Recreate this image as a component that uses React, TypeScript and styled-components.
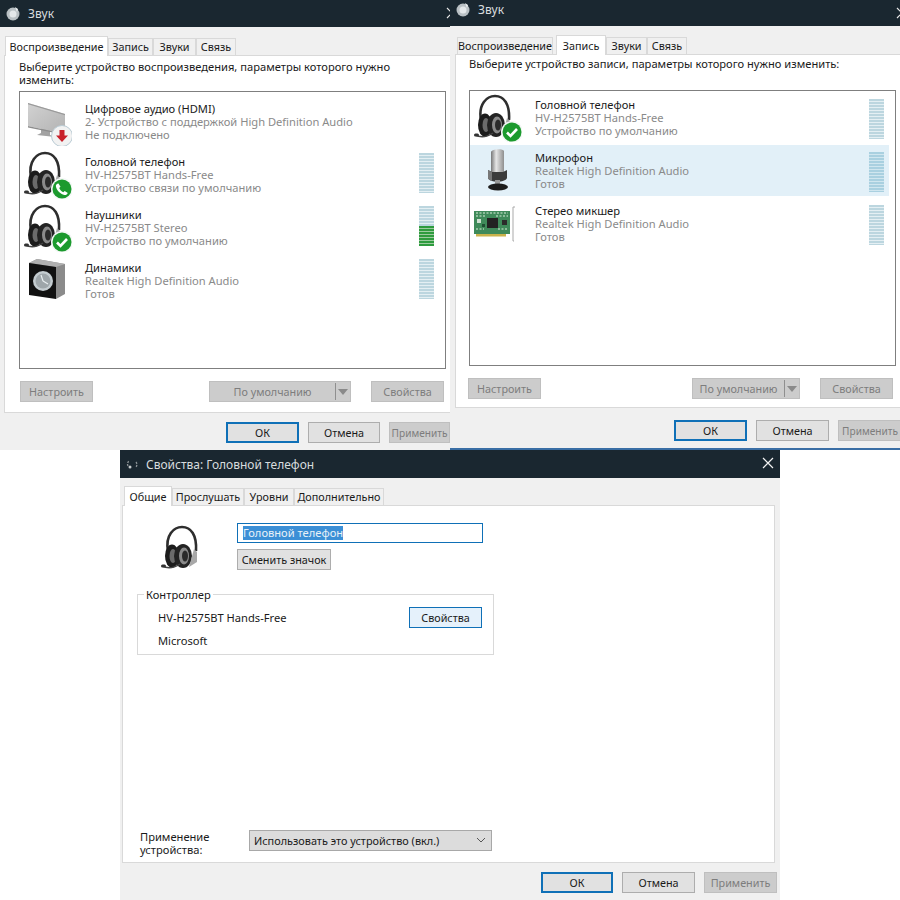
import React from "react";
import styled, { createGlobalStyle } from "styled-components";

const Global = createGlobalStyle`
  html, body { margin: 0; padding: 0; background: #fff; }
  body { font-family: "Noto Sans", "Open Sans", sans-serif; font-size: 11.15px; color: #1a1a1a; }
  #root { width: 900px; height: 900px; overflow: hidden; }
`;

const Page = styled.div`
  width: 900px;
  height: 900px;
  display: flex;
  flex-direction: column;
  background: #fff;
`;
const TopRow = styled.div`
  display: flex;
  height: 450px;
`;
const BottomRow = styled.div`
  display: flex;
  height: 450px;
  padding-left: 120px;
`;
const Win = styled.section<{ $w: number; $blue?: boolean }>`
  width: ${(p) => p.$w}px;
  height: 450px;
  flex: none;
  display: flex;
  flex-direction: column;
  background: #f0f0f0;
  overflow: hidden;
  box-sizing: border-box;
  border-bottom: ${(p) => (p.$blue ? "2px solid #3a6ea5" : "none")};
`;
const TitleBar = styled.header<{ $h: number; $pl: number; $pb?: number }>`
  height: ${(p) => p.$h}px;
  flex: none;
  box-sizing: border-box;
  background: #1a2730;
  color: #d8dcde;
  display: flex;
  align-items: center;
  padding-left: ${(p) => p.$pl}px;
  padding-bottom: ${(p) => p.$pb ?? 0}px;
  gap: 7px;
  font-size: 12px;
  position: relative;
`;
const CloseX = styled.span<{ $r: number }>`
  position: absolute;
  right: ${(p) => p.$r}px;
  top: 6px;
  width: 14px;
  height: 14px;
  display: block;
`;
const Tabs = styled.nav<{ $h: number; $pl: number }>`
  height: ${(p) => p.$h}px;
  flex: none;
  display: flex;
  align-items: flex-end;
  padding-left: ${(p) => p.$pl}px;
`;
const Tab = styled.div<{ $w: number; $active?: boolean; $gap?: number }>`
  width: ${(p) => p.$w}px;
  height: ${(p) => (p.$active ? 20 : 17)}px;
  margin-left: ${(p) => p.$gap ?? 0}px;
  box-sizing: border-box;
  display: flex;
  align-items: center;
  justify-content: center;
  border: 1px solid #d9d9d9;
  border-bottom: none;
  background: ${(p) => (p.$active ? "#fff" : "#f0f0f0")};
  font-size: 10.8px;
  line-height: 14px;
  white-space: nowrap;
  flex: none;
  position: relative;
  top: ${(p) => (p.$active ? 1 : 0)}px;
  z-index: ${(p) => (p.$active ? 1 : 0)};
`;
const TabPanel = styled.div<{ $h: number; $ml: number; $w: number; $pt: number; $pl: number }>`
  height: ${(p) => p.$h}px;
  width: ${(p) => p.$w}px;
  margin-left: ${(p) => p.$ml}px;
  padding: ${(p) => p.$pt}px 0 0 ${(p) => p.$pl}px;
  box-sizing: border-box;
  flex: none;
  background: #fff;
  border: 1px solid #d9d9d9;
  display: flex;
  flex-direction: column;
`;
const Prompt = styled.p<{ $h: number; $w: number }>`
  margin: 0;
  height: ${(p) => p.$h}px;
  width: ${(p) => p.$w}px;
  line-height: 13px;
  flex: none;
`;
const DeviceList = styled.div<{ $h: number; $pt: number }>`
  width: 427px;
  height: ${(p) => p.$h}px;
  box-sizing: border-box;
  flex: none;
  border: 1px solid #7f7f7f;
  padding: ${(p) => p.$pt}px 6px 0 0;
  background: #fff;
`;
const Row = styled.div<{ $sel?: boolean }>`
  height: 53px;
  box-sizing: border-box;
  display: flex;
  align-items: center;
  padding: 0 5px 0 4px;
  background: ${(p) => (p.$sel ? "linear-gradient(#e2f0f8, #e2f0f8) 0 1px / 100% 51px no-repeat" : "transparent")};
`;
const IconBox = styled.div`
  width: 48px;
  height: 48px;
  flex: none;
  svg { display: block; }
`;
const RowText = styled.div`
  margin-left: 13px;
  flex: 1;
  min-width: 0;
  line-height: 13px;
`;
const Name = styled.div`
  color: #1a1a1a;
`;
const Sub = styled.div`
  color: #8a8a8a;
`;
const Meter = styled.div<{ $fill: number; $sel?: boolean; $dy: number }>`
  width: 15px;
  height: 40px;
  flex: none;
  margin-top: ${(p) => p.$dy}px;
  background:
    ${(p) =>
      p.$fill
        ? `repeating-linear-gradient(to top, #2e9b3e 0 2px, #9ccb9f 2px 3px) bottom / 100% ${p.$fill}px no-repeat,`
        : ""}
    repeating-linear-gradient(to bottom, ${(p) => (p.$sel ? "#a9d0e0" : "#bcd6df")} 0 2px, ${(p) => (p.$sel ? "#d0e6ef" : "#e4eff3")} 2px 3px);
`;
const ButtonRow = styled.div<{ $mt: number; $w: number; $ml: number }>`
  display: flex;
  width: ${(p) => p.$w}px;
  margin: ${(p) => p.$mt}px 0 0 ${(p) => p.$ml}px;
  justify-content: space-between;
  flex: none;
`;
const SideGroup = styled.div`
  display: flex;
  gap: 20px;
`;
const Btn = styled.button<{ $w: number; $h?: number }>`
  width: ${(p) => p.$w}px;
  height: ${(p) => p.$h ?? 21}px;
  flex: none;
  box-sizing: border-box;
  border: 1px solid #adadad;
  background: #e1e1e1;
  color: #1a1a1a;
  font: inherit;
  font-size: 10.8px;
  padding: 0;
  white-space: nowrap;
  display: flex;
  align-items: center;
  justify-content: center;
`;
const DisabledBtn = styled(Btn)`
  background: #cccccc;
  border-color: #bfbfbf;
  color: #7d7d7d;
`;
const ClippedBtn = styled(DisabledBtn)`
  font-size: 10.1px;
`;
const DefaultBtn = styled(Btn)`
  border: 2px solid #0f70b7;
  background: #e1e1e1;
`;
const FocusBtn = styled(Btn)`
  border: 1px solid #0f70b7;
  background: #e5f1fb;
`;
const SplitBtn = styled(DisabledBtn)`
  justify-content: flex-start;
`;
const SplitLabel = styled.span`
  flex: 1;
  text-align: center;
  border-right: 1px solid #8f8f8f;
  line-height: 17px;
`;
const SplitArrow = styled.span`
  width: 14px;
  flex: none;
  display: flex;
  justify-content: center;
  &::before {
    content: "";
    border: 5px solid transparent;
    border-top: 6px solid #8a8a8a;
    border-bottom: 0;
  }
`;
const Footer = styled.footer<{ $pl: number; $mt: number }>`
  display: flex;
  gap: 9px;
  padding-left: ${(p) => p.$pl}px;
  margin-top: ${(p) => p.$mt}px;
  flex: none;
`;
const HeadRow = styled.div`
  display: flex;
  height: 70px;
  flex: none;
`;
const BigIcon = styled.div`
  width: 114px;
  padding: 19px 0 0 38px;
  box-sizing: border-box;
  flex: none;
`;
const NameCol = styled.div`
  padding-top: 17px;
  display: flex;
  flex-direction: column;
  gap: 6px;
`;
const NameInput = styled.div`
  width: 246px;
  height: 20px;
  box-sizing: border-box;
  border: 1px solid #0f70b7;
  padding-left: 5px;
  display: flex;
  align-items: center;
`;
const Selected = styled.span`
  background: #3b8fd6;
  color: #e8f1f8;
  line-height: 14px;
`;
const Group = styled.fieldset`
  width: 357px;
  height: 67px;
  margin: 12px 0 0 14px;
  box-sizing: border-box;
  border: 1px solid #d9d9d9;
  padding: 0 11px 0 20px;
  flex: none;
  display: flex;
  justify-content: space-between;
`;
const Legend = styled.legend`
  padding: 0 2px;
  margin-left: -14px;
  line-height: 13px;
`;
const GroupText = styled.div`
  padding-top: 10px;
  display: flex;
  flex-direction: column;
  gap: 10px;
  line-height: 13px;
`;
const GroupAction = styled.div`
  padding-top: 6px;
`;
const UsageRow = styled.div`
  display: flex;
  align-items: center;
  margin: auto 0 6px 17px;
  flex: none;
`;
const UsageLabel = styled.div`
  width: 109px;
  margin-top: 6px;
  line-height: 13px;
  flex: none;
`;
const SelectBox = styled.div`
  width: 243px;
  height: 21px;
  box-sizing: border-box;
  border: 1px solid #a8a8a8;
  background: #dcdcdc;
  display: flex;
  align-items: center;
  justify-content: space-between;
  padding: 0 5px 0 4px;
  font-size: 10.9px;
`;

const Check = () => (
  <g>
    <circle cx="38" cy="38" r="11" fill="#f4f8f6" />
    <circle cx="38" cy="38" r="9.5" fill="#1c9a2e" />
    <path d="M33 38.5l3.5 3.5 6.5-7" stroke="#fff" strokeWidth="2.6" fill="none" />
  </g>
);
const Phone = () => (
  <g>
    <circle cx="38" cy="38" r="11" fill="#f4f8f6" />
    <circle cx="38" cy="38" r="9.5" fill="#1c9a2e" />
    <path d="M34.5 32.5l2 3.2-1.3 1.3c.7 1.9 2.2 3.4 4.1 4.2l1.4-1.3 3.1 2c-.6 1.5-2 2.3-3.4 2-4.3-1-7.8-4.5-8.5-8.7-.2-1.3.8-2.4 2.6-2.7z" fill="#fff" />
  </g>
);
const Headset = ({ badge }: { badge?: React.ReactNode }) => (
  <svg width="48" height="48" viewBox="0 0 48 48">
    <path d="M7 26C4 10 13 2 21 2c9 0 15 8 14 24" stroke="#2e2e2e" strokeWidth="2.6" fill="none" />
    <ellipse cx="11" cy="31" rx="7" ry="11.5" fill="#1c1c1c" />
    <ellipse cx="12" cy="31" rx="3.5" ry="7" fill="#6b6b6b" />
    <ellipse cx="22" cy="31" rx="9" ry="12" fill="#232323" />
    <ellipse cx="23" cy="31" rx="5" ry="8.5" fill="#8a8a8a" />
    <ellipse cx="24" cy="31" rx="3" ry="5.5" fill="#2a2a2a" />
    <path d="M33 24l3 3v10l-8 5z" fill="#a8a8a8" />
    <path d="M1 41c6 3 12 2 18-2" stroke="#444" strokeWidth="1.5" fill="none" />
    <rect x="0" y="39.5" width="5" height="3" rx="1.5" fill="#333" />
    {badge}
  </svg>
);
const MonitorIcon = () => (
  <svg width="48" height="48" viewBox="0 0 48 48">
    <defs>
      <linearGradient id="scr" x1="0" y1="0" x2="1" y2="1">
        <stop offset="0" stopColor="#d2d2d2" />
        <stop offset="1" stopColor="#b2b2b2" />
      </linearGradient>
    </defs>
    <path d="M17 30l9 2v5l5 2-18-2 4-2z" fill="#a3a3a3" />
    <path d="M4 5l37 11v20L4 28z" fill="url(#scr)" />
    <path d="M4 5l37 11v1.2L4 6.2z" fill="#9a9a9a" />
    <path d="M4 28l37 8v1L4 29.5z" fill="#8d8d8d" />
    <circle cx="38" cy="38" r="10.5" fill="#f2f2f2" stroke="#b9cbd4" />
    <path d="M35.5 32h5v5.5h3.5L38 44l-6-6.5h3.5z" fill="#c8202a" />
  </svg>
);
const SpeakerIcon = () => (
  <svg width="48" height="48" viewBox="0 0 48 48">
    <path d="M5 6L13 2l28 5v30l-9 5z" fill="#8b8b8b" />
    <path d="M5 6l8-4 28 5-9 3z" fill="#b0b0b0" />
    <path d="M5 6l27 4v32L5 38z" fill="#111" />
    <circle cx="19" cy="24" r="10" fill="#c4ccd0" />
    <circle cx="19" cy="24" r="7.5" fill="#9ea6aa" />
    <path d="M19 24l-2-6M19 24l5 3" stroke="#e8eef0" strokeWidth="1.2" />
  </svg>
);
const MicIcon = () => (
  <svg width="48" height="48" viewBox="0 0 48 48">
    <defs>
      <linearGradient id="mc" x1="0" y1="0" x2="1" y2="0">
        <stop offset="0" stopColor="#777" />
        <stop offset=".4" stopColor="#e6e6e6" />
        <stop offset="1" stopColor="#8f8f8f" />
      </linearGradient>
    </defs>
    <path d="M17 5c0-3 12-4 13-1v21H17z" fill="url(#mc)" />
    <path d="M14 23l4 2h11l4-2v8c-2 5-17 5-19 0z" fill="#3c3c3c" />
    <path d="M14 23l4 2v9c-2-.5-4-2-4-3z" fill="#777" />
    <rect x="21" y="33" width="5" height="6" fill="#999" />
    <ellipse cx="24" cy="40" rx="10" ry="3.5" fill="#1d1d1d" />
  </svg>
);
const CardIcon = () => (
  <svg width="48" height="48" viewBox="0 0 48 48">
    <rect x="0" y="11" width="36" height="23" fill="#3f8a5a" />
    <path d="M2 13h32M2 16h10M22 16h12M2 29h8M24 29h10" stroke="#a7cdb0" strokeWidth="1.4" strokeDasharray="2 1.5" />
    <rect x="13" y="18" width="11" height="10" fill="#222" />
    <rect x="28" y="20" width="5" height="5" fill="#2b2b2b" />
    <rect x="3" y="19" width="4" height="4" fill="#cfe0d2" />
    <rect x="8" y="24" width="3" height="3" fill="#1e4f33" />
    <rect x="2" y="34" width="30" height="2.5" fill="#c9b24b" />
    <path d="M41 7h-2v34h1" stroke="#a9a9a9" strokeWidth="1" fill="none" />
  </svg>
);
const SphereIcon = () => (
  <svg width="16" height="18" viewBox="0 0 16 18">
    <circle cx="8" cy="9" r="6.5" fill="#b9c0c4" />
    <circle cx="8" cy="9" r="3.5" fill="#e4e8ea" />
    <path d="M10 2l3 2-1 3z" fill="#eceff0" />
  </svg>
);
const NoteIcon = () => (
  <svg width="14" height="14" viewBox="0 0 14 14">
    <path d="M3 9a4 4 0 0 1 1-5M11 5a4 4 0 0 1 0 5" stroke="#8d9396" strokeWidth="1.3" fill="none" strokeDasharray="2 1" />
    <circle cx="5" cy="10" r="1.5" fill="#c8cccd" />
  </svg>
);
const Cross = ({ c = "#e8e8e8" }: { c?: string }) => (
  <svg width="14" height="14" viewBox="0 0 14 14">
    <path d="M2 2l10 10M12 2L2 12" stroke={c} strokeWidth="1.2" />
  </svg>
);
const Chevron = () => (
  <svg width="10" height="6" viewBox="0 0 10 6">
    <path d="M1 1l4 4 4-4" stroke="#555" strokeWidth="1" fill="none" />
  </svg>
);

type Dev = { icon: React.ReactNode; name: string; a: string; b: string; meter?: boolean; fill?: number; sel?: boolean };

const Device = ({ d, dy }: { d: Dev; dy: number }) => (
  <Row $sel={d.sel}>
    <IconBox>{d.icon}</IconBox>
    <RowText>
      <Name>{d.name}</Name>
      <Sub>{d.a}</Sub>
      <Sub>{d.b}</Sub>
    </RowText>
    {d.meter && <Meter $fill={d.fill ?? 0} $sel={d.sel} $dy={dy} />}
  </Row>
);

const playback: Dev[] = [
  { icon: <MonitorIcon />, name: "Цифровое аудио (HDMI)", a: "2- Устройство с поддержкой High Definition Audio", b: "Не подключено" },
  { icon: <Headset badge={<Phone />} />, name: "Головной телефон", a: "HV-H2575BT Hands-Free", b: "Устройство связи по умолчанию", meter: true },
  { icon: <Headset badge={<Check />} />, name: "Наушники", a: "HV-H2575BT Stereo", b: "Устройство по умолчанию", meter: true, fill: 20 },
  { icon: <SpeakerIcon />, name: "Динамики", a: "Realtek High Definition Audio", b: "Готов", meter: true },
];
const recording: Dev[] = [
  { icon: <Headset badge={<Check />} />, name: "Головной телефон", a: "HV-H2575BT Hands-Free", b: "Устройство по умолчанию", meter: true },
  { icon: <MicIcon />, name: "Микрофон", a: "Realtek High Definition Audio", b: "Готов", meter: true, sel: true },
  { icon: <CardIcon />, name: "Стерео микшер", a: "Realtek High Definition Audio", b: "Готов", meter: true },
];

export default function App() {
  return (
    <Page>
      <Global />
      <TopRow>
        <Win $w={450}>
          <TitleBar $h={27} $pl={5}>
            <SphereIcon />
            Звук
            <CloseX $r={-9}><Cross /></CloseX>
          </TitleBar>
          <Tabs $h={28} $pl={5}>
            <Tab $w={103} $active>Воспроизведение</Tab>
            <Tab $w={45}>Запись</Tab>
            <Tab $w={43}>Звуки</Tab>
            <Tab $w={40}>Связь</Tab>
          </Tabs>
          <TabPanel $h={358} $w={450} $ml={4} $pt={4} $pl={14}>
            <Prompt $h={31} $w={400}>Выберите устройство воспроизведения, параметры которого нужно изменить:</Prompt>
            <DeviceList $h={278} $pt={3}>
              {playback.map((d) => <Device key={d.name} d={d} dy={-3} />)}
            </DeviceList>
            <ButtonRow $mt={12} $w={424} $ml={1}>
              <DisabledBtn $w={73}>Настроить</DisabledBtn>
              <SideGroup>
                <SplitBtn $w={142}><SplitLabel>По умолчанию</SplitLabel><SplitArrow /></SplitBtn>
                <DisabledBtn $w={73}>Свойства</DisabledBtn>
              </SideGroup>
            </ButtonRow>
          </TabPanel>
          <Footer $pl={226} $mt={9}>
            <DefaultBtn $w={73}>ОК</DefaultBtn>
            <Btn $w={72}>Отмена</Btn>
            <ClippedBtn $w={61}>Применить</ClippedBtn>
          </Footer>
        </Win>
        <Win $w={450} $blue>
          <TitleBar $h={26} $pl={5} $pb={7}>
            <SphereIcon />
            Звук
            <CloseX $r={-9}><Cross /></CloseX>
          </TitleBar>
          <Tabs $h={28} $pl={7}>
            <Tab $w={96}>Воспроизведение</Tab>
            <Tab $w={50} $active $gap={3}>Запись</Tab>
            <Tab $w={41}>Звуки</Tab>
            <Tab $w={40}>Связь</Tab>
          </Tabs>
          <TabPanel $h={354} $w={450} $ml={5} $pt={2} $pl={13}>
            <Prompt $h={33} $w={420}>Выберите устройство записи, параметры которого нужно изменить:</Prompt>
            <DeviceList $h={276} $pt={0}>
              {recording.map((d) => <Device key={d.name} d={d} dy={2} />)}
            </DeviceList>
            <ButtonRow $mt={12} $w={425} $ml={-1}>
              <DisabledBtn $w={73}>Настроить</DisabledBtn>
              <SideGroup>
                <SplitBtn $w={108}><SplitLabel>По умолчанию</SplitLabel><SplitArrow /></SplitBtn>
                <DisabledBtn $w={73}>Свойства</DisabledBtn>
              </SideGroup>
            </ButtonRow>
          </TabPanel>
          <Footer $pl={224} $mt={12}>
            <DefaultBtn $w={73}>ОК</DefaultBtn>
            <Btn $w={73}>Отмена</Btn>
            <ClippedBtn $w={64}>Применить</ClippedBtn>
          </Footer>
        </Win>
      </TopRow>
      <BottomRow>
        <Win $w={660}>
          <TitleBar $h={28} $pl={5}>
            <NoteIcon />
            Свойства: Головной телефон
            <CloseX $r={5}><Cross c="#f2f2f2" /></CloseX>
          </TitleBar>
          <Tabs $h={27} $pl={4}>
            <Tab $w={48} $active>Общие</Tab>
            <Tab $w={72}>Прослушать</Tab>
            <Tab $w={50}>Уровни</Tab>
            <Tab $w={90}>Дополнительно</Tab>
          </Tabs>
          <TabPanel $h={358} $w={653} $ml={2} $pt={0} $pl={0}>
            <HeadRow>
              <BigIcon><Headset /></BigIcon>
              <NameCol>
                <NameInput><Selected>Головной телефон</Selected></NameInput>
                <Btn $w={94}>Сменить значок</Btn>
              </NameCol>
            </HeadRow>
            <Group>
              <Legend>Контроллер</Legend>
              <GroupText>
                <span>HV-H2575BT Hands-Free</span>
                <span>Microsoft</span>
              </GroupText>
              <GroupAction><FocusBtn $w={73}>Свойства</FocusBtn></GroupAction>
            </Group>
            <UsageRow>
              <UsageLabel>Применение устройства:</UsageLabel>
              <SelectBox>Использовать это устройство (вкл.)<Chevron /></SelectBox>
            </UsageRow>
          </TabPanel>
          <Footer $pl={421} $mt={9}>
            <DefaultBtn $w={72}>ОК</DefaultBtn>
            <Btn $w={73}>Отмена</Btn>
            <DisabledBtn $w={73}>Применить</DisabledBtn>
          </Footer>
        </Win>
      </BottomRow>
    </Page>
  );
}
